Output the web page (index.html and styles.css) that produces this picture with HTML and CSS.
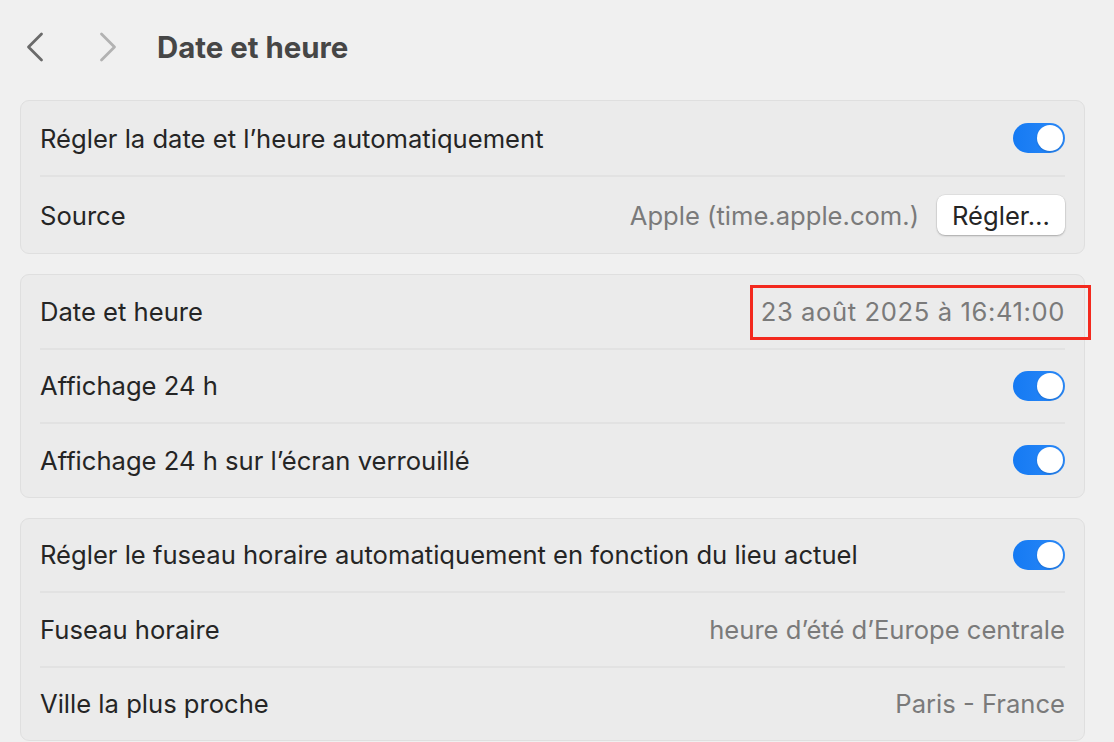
FILE: index.html
```html
<!DOCTYPE html>
<html lang="fr">
<head>
<meta charset="utf-8">
<link rel="stylesheet" href="styles.css">
</head>
<body>
<div class="page">
  <header class="toolbar">
    <button class="nav back" aria-label="Précédent">
      <svg width="18" height="30" viewBox="0 0 18 30"><path d="M15.5 2 L2.5 15 L15.5 28" fill="none" stroke="currentColor" stroke-width="2.8" stroke-linecap="round" stroke-linejoin="round"/></svg>
    </button>
    <button class="nav fwd" aria-label="Suivant">
      <svg width="18" height="30" viewBox="0 0 18 30"><path d="M2.5 2 L15.5 15 L2.5 28" fill="none" stroke="currentColor" stroke-width="2.8" stroke-linecap="round" stroke-linejoin="round"/></svg>
    </button>
    <h1 class="title">Date et heure</h1>
  </header>

  <section class="card tall">
    <div class="row">
      <span class="label">Régler la date et l’heure automatiquement</span>
      <span class="toggle"><span class="knob"></span></span>
    </div>
    <div class="row">
      <span class="label">Source</span>
      <span class="right">
        <span class="value">Apple (time.apple.com.)</span>
        <button class="btn">Régler…</button>
      </span>
    </div>
  </section>

  <section class="card">
    <div class="row">
      <span class="label">Date et heure</span>
      <span class="value date">23 août 2025 à 16:41:00</span>
    </div>
    <div class="row">
      <span class="label">Affichage 24 h</span>
      <span class="toggle"><span class="knob"></span></span>
    </div>
    <div class="row">
      <span class="label">Affichage 24 h sur l’écran verrouillé</span>
      <span class="toggle"><span class="knob"></span></span>
    </div>
    <div class="redbox"></div>
  </section>

  <section class="card">
    <div class="row">
      <span class="label">Régler le fuseau horaire automatiquement en fonction du lieu actuel</span>
      <span class="toggle"><span class="knob"></span></span>
    </div>
    <div class="row">
      <span class="label">Fuseau horaire</span>
      <span class="value">heure d’été d’Europe centrale</span>
    </div>
    <div class="row">
      <span class="label">Ville la plus proche</span>
      <span class="value">Paris - France</span>
    </div>
  </section>
</div>
</body>
</html>
```

FILE: styles.css
```css
* { box-sizing: border-box; }
html, body {
  margin: 0;
  padding: 0;
  background: #f0f0f0;
  font-family: "Inter", "Liberation Sans", sans-serif;
  color: #252525;
  overflow: hidden;
}
.page {
  padding: 0 29px 0 20px;
  display: flex;
  flex-direction: column;
  gap: 20px;
}
.toolbar {
  height: 80px;
  padding-top: 14px;
  display: flex;
  align-items: center;
}
.nav {
  background: none;
  border: 0;
  padding: 0;
  display: flex;
  align-items: center;
  justify-content: center;
  width: 18px;
  height: 30px;
}
.nav.back { color: #6a6a6a; margin-left: 6px; }
.nav.fwd { color: #b2b2b2; margin-left: 55px; }
.title {
  margin: 0 0 0 40px;
  font-size: 29.4px;
  font-weight: 700;
  color: #464646;
}
.card {
  position: relative;
  background: #ebebeb;
  border: 1px solid #dfdfdf;
  border-radius: 9px;
  padding: 0 19px;
}
.row {
  height: 72.5px;
  display: flex;
  align-items: center;
  justify-content: space-between;
  font-size: 25.6px;
}
.card.tall .row { height: 74px; }
.row + .row { border-top: 2px solid #e2e2e2; }
.card .row + .row { height: 74.5px; }
.card.tall .row + .row { height: 78px; }
.label { color: #252525; }
.value { color: #7a7a7a; }
.value.date { letter-spacing: 0.6px; }
.right { display: flex; align-items: center; gap: 18px; }
.toggle {
  width: 52px;
  height: 30px;
  border-radius: 15px;
  background: linear-gradient(90deg, #157af3, #2a88f7);
  display: flex;
  align-items: center;
  justify-content: flex-end;
  padding-right: 2px;
}
.knob {
  width: 26px;
  height: 26px;
  border-radius: 50%;
  background: #ffffff;
  box-shadow: 0 1px 2px rgba(0,0,0,0.15);
}
.btn {
  height: 40px;
  width: 128px;
  background: #ffffff;
  border: 0;
  border-radius: 8px;
  box-shadow: 0 1px 2px rgba(0,0,0,0.25), 0 0 0 0.5px rgba(0,0,0,0.08);
  font-family: inherit;
  font-size: 25.6px;
  color: #252525;
  padding: 0;
}
.redbox {
  position: absolute;
  left: 729px;
  top: 10px;
  width: 341px;
  height: 55px;
  border: 3px solid #f3291e;
}
```
